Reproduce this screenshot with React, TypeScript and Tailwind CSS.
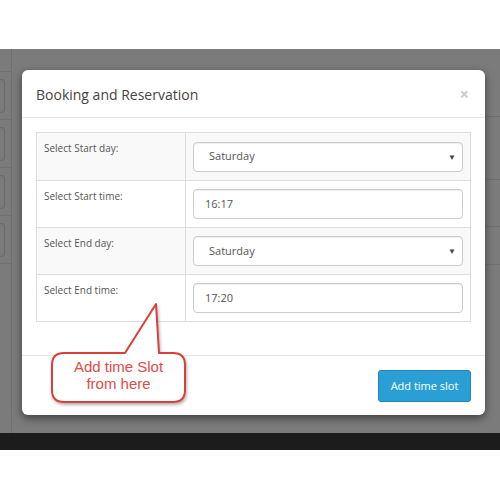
const rows = [
  { label: 'Select Start day:', kind: 'select', value: 'Saturday', bg: 'bg-[#f9f9f9]' },
  { label: 'Select Start time:', kind: 'input', value: '16:17', bg: 'bg-white' },
  { label: 'Select End day:', kind: 'select', value: 'Saturday', bg: 'bg-[#f9f9f9]' },
  { label: 'Select End time:', kind: 'input', value: '17:20', bg: 'bg-white' },
];

function BackdropPage() {
  // faint page content seen behind the dark overlay
  return (
    <div className="flex h-full w-full">
      <div className="flex w-[12px] flex-col border-r border-[#6f6f6f]">
        <div className="h-[23px] border-b border-[#6f6f6f]" />
        {[0, 1, 2, 3].map((i) => (
          <div key={i} className="flex h-[48px] items-center border-b border-[#6f6f6f]">
            <div className="h-[34px] w-[5px] rounded-r-[4px] border border-l-0 border-[#6a6a6a]" />
          </div>
        ))}
      </div>
      <div className="flex-1" />
      <div className="flex w-[15px] flex-col">
        <div className="h-[68px] border-b border-[#6f6f6f]" />
        <div className="h-[63px] border-b border-[#6f6f6f]" />
        <div className="h-[47px] border-b border-[#6f6f6f]" />
        <div className="h-[38px] border-b border-[#6f6f6f]" />
      </div>
    </div>
  );
}

function Field({ kind, value }: { kind: string; value: string }) {
  return (
    <div className="flex h-[30px] w-full items-center justify-between rounded-[4px] border border-[#cccccc] bg-white shadow-[inset_0_1px_1px_rgba(0,0,0,0.075)]">
      <span className={kind === 'select' ? 'pl-[15px] text-[11px] text-[#555]' : 'pl-[11px] text-[11px] text-[#555]'}>
        {value}
      </span>
      {kind === 'select' && <span className="pr-[6px] text-[8px] text-[#444]">▼</span>}
    </div>
  );
}

function Callout() {
  return (
    <div className="absolute left-[40px] top-[295px] h-[120px] w-[160px]">
      <svg width="160" height="120" viewBox="0 0 160 120" className="absolute inset-0">
        <defs>
          <filter id="sh" x="-20%" y="-20%" width="140%" height="140%">
            <feDropShadow dx="1" dy="2" stdDeviation="1.5" floodColor="#000" floodOpacity="0.3" />
          </filter>
        </defs>
        <path
          d="M24 58 L85 58 L116 9 L119 58 L133 58 Q145 58 145 70 L145 95 Q145 107 133 107 L24 107 Q12 107 12 95 L12 70 Q12 58 24 58 Z"
          fill="#fff"
          stroke="#d9403a"
          strokeWidth="2"
          strokeLinejoin="round"
          filter="url(#sh)"
        />
      </svg>
      <div className="absolute left-[12px] top-[63px] flex w-[133px] flex-col items-center font-['Liberation_Sans',Arial,sans-serif] text-[15px] leading-[17px] text-[#e04b45]">
        <span>Add time Slot</span>
        <span>from here</span>
      </div>
    </div>
  );
}

export default function App() {
  return (
    <div className="relative h-[500px] w-[500px] overflow-hidden bg-white font-['Open_Sans','Noto_Sans',sans-serif]">
      <div className="h-[49px] bg-white" />
      <div className="relative h-[384px] bg-[#7b7b7b]">
        <BackdropPage />
        <div className="absolute left-[22px] top-[21px] flex h-[345px] w-[463px] flex-col rounded-[6px] bg-white shadow-[0_3px_9px_rgba(0,0,0,0.5)]">
          <div className="flex h-[48px] items-center justify-between border-b border-[#e5e5e5] px-[14px]">
            <h4 className="pt-[1px] text-[14px] text-[#444]">Booking and Reservation</h4>
            <span className="pr-[2px] text-[16px] font-bold text-[#c8c8c8]">×</span>
          </div>
          <div className="px-[14px] pt-[14px] pb-[33px]">
            <div className="border border-[#dddddd]">
              {rows.map((r, i) => (
                <div key={i} className={`flex h-[47px] ${r.bg} ${i > 0 ? 'border-t border-[#dddddd]' : ''}`}>
                  <div className="w-[149px] border-r border-[#dddddd] px-[7px] pt-[7px] text-[10px] leading-[16px] text-[#555]">
                    {r.label}
                  </div>
                  <div className="flex flex-1 items-center px-[7px]">
                    <Field kind={r.kind} value={r.value} />
                  </div>
                </div>
              ))}
            </div>
          </div>
          <div className="flex justify-end border-t border-[#e5e5e5] px-[14px] pt-[14px]">
            <button className="h-[32px] w-[93px] rounded-[3px] border border-[#2384b6] bg-[#2a9fd6] text-[11px] text-white">
              Add time slot
            </button>
          </div>
        </div>
      </div>
      <div className="h-[17px] bg-[#1c1c1c]" />
      <Callout />
    </div>
  );
}
